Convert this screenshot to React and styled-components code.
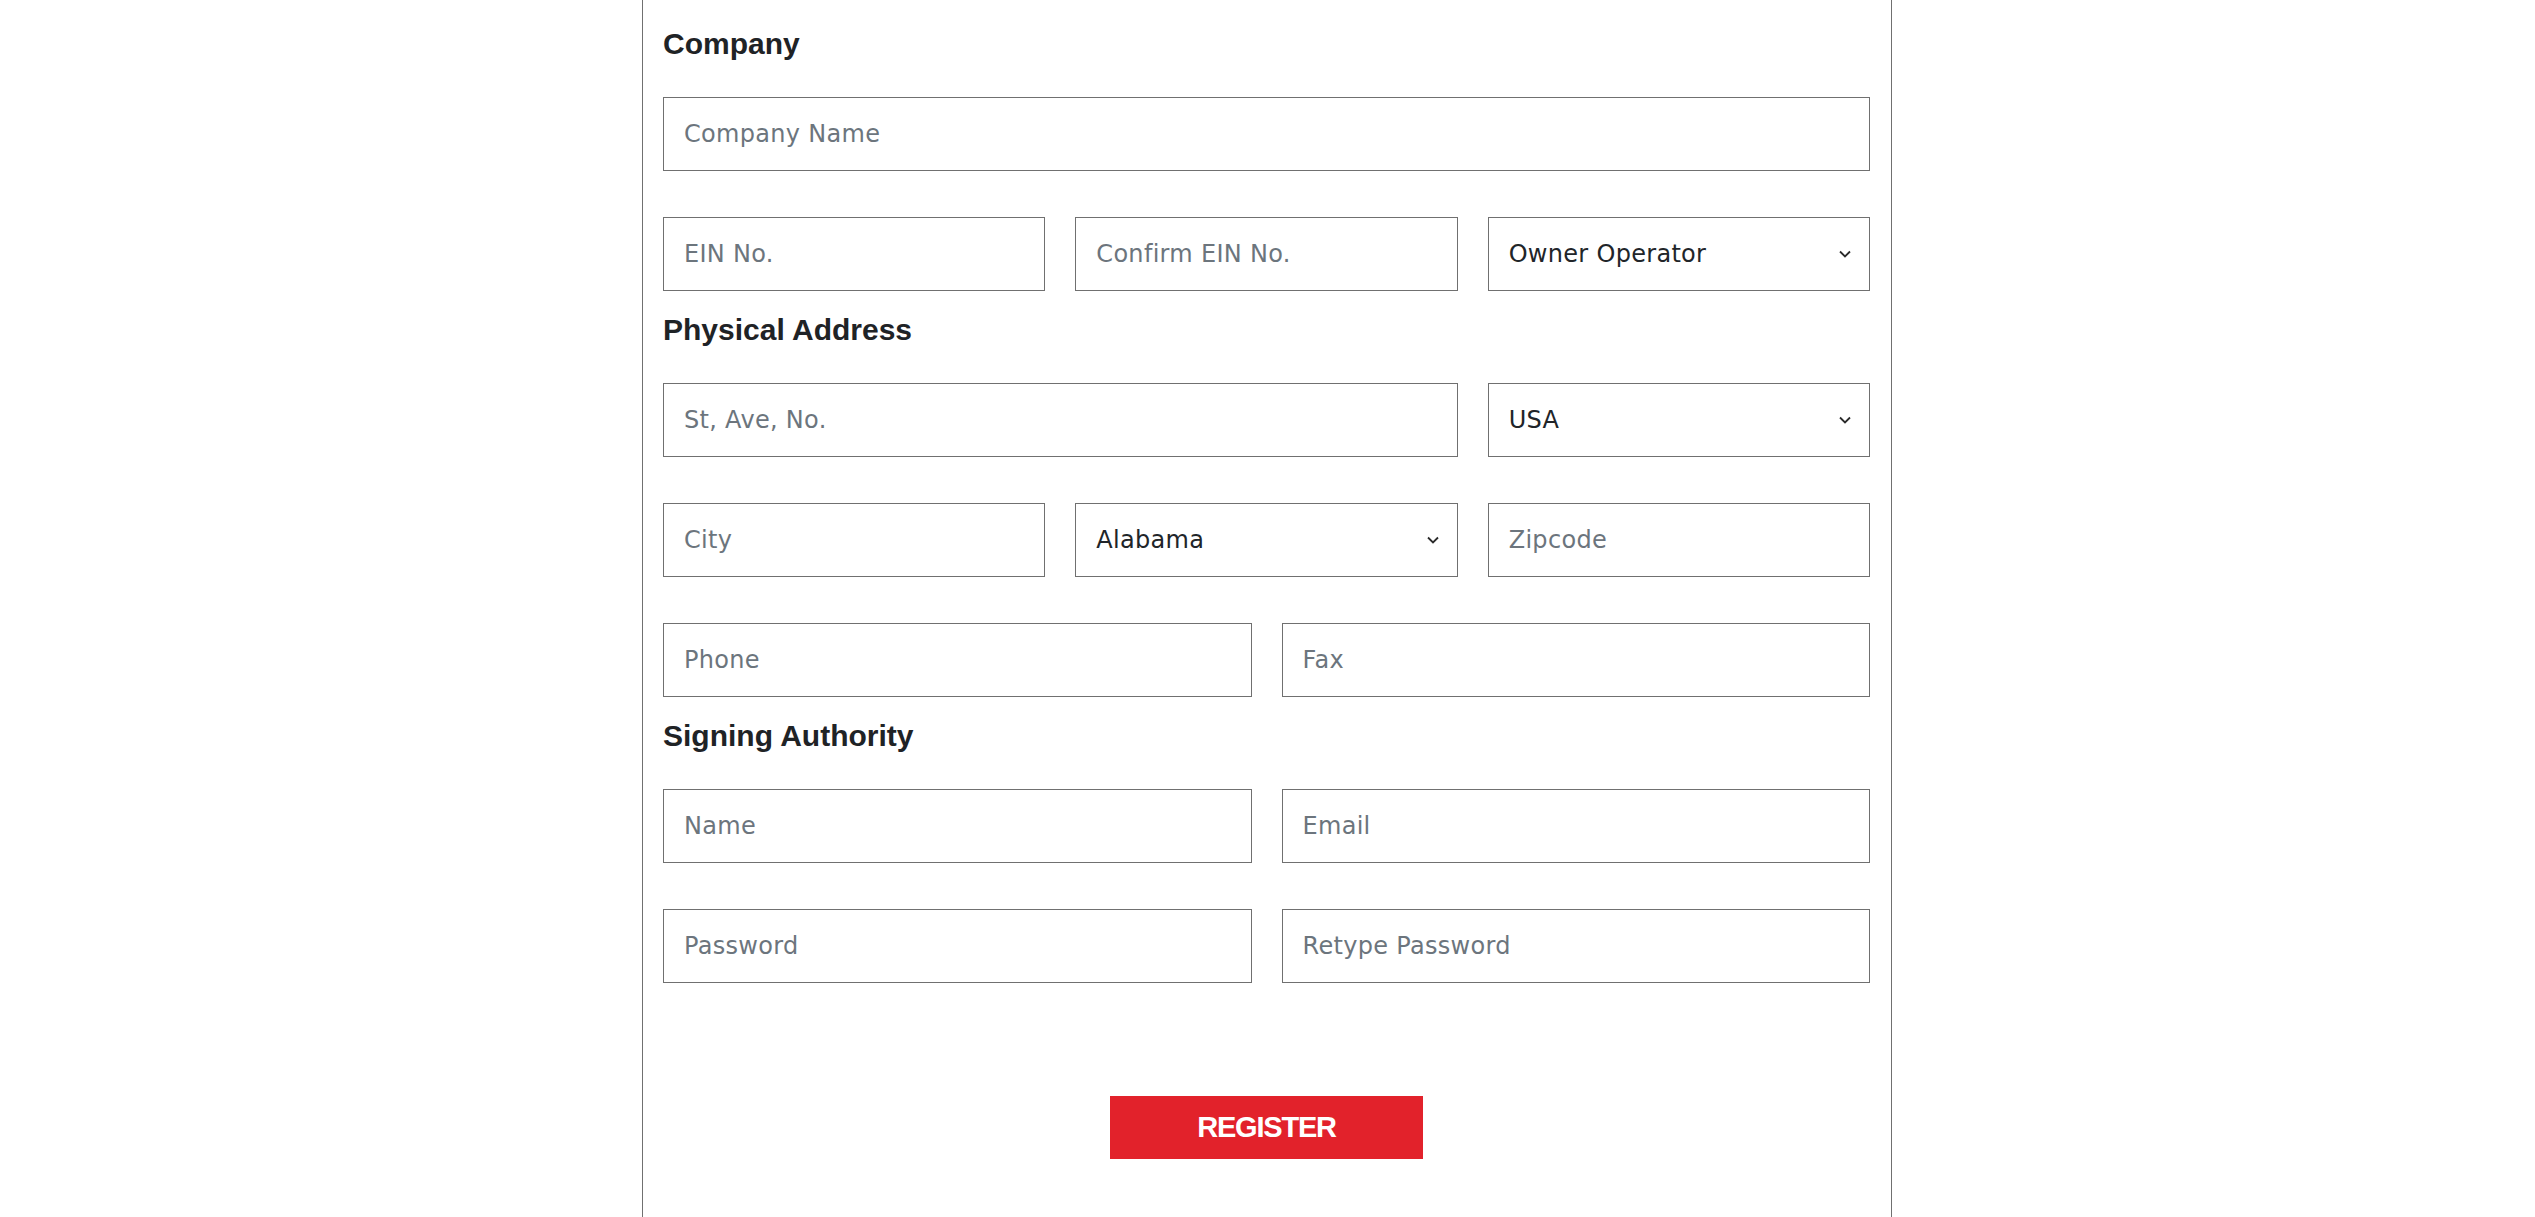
import React from "react";
import styled, { createGlobalStyle } from "styled-components";

const GlobalStyle = createGlobalStyle`
  html, body {
    margin: 0;
    padding: 0;
    background: #ffffff;
  }
  body {
    font-family: "DejaVu Sans", "Liberation Sans", sans-serif;
  }
`;

const sections = [
  {
    title: "Company",
    fields: [
      { name: "company", placeholder: "Company Name", span: 6 },
      { name: "ein", placeholder: "EIN No.", span: 2 },
      { name: "ein2", placeholder: "Confirm EIN No.", span: 2 },
      { name: "type", options: ["Owner Operator", "Carrier", "Broker"], span: 2 },
    ],
  },
  {
    title: "Physical Address",
    fields: [
      { name: "street", placeholder: "St, Ave, No.", span: 4 },
      { name: "country", options: ["USA", "Canada", "Mexico"], span: 2 },
      { name: "city", placeholder: "City", span: 2 },
      { name: "state", options: ["Alabama", "Alaska", "Arizona"], span: 2 },
      { name: "zip", placeholder: "Zipcode", span: 2 },
      { name: "phone", placeholder: "Phone", span: 3 },
      { name: "fax", placeholder: "Fax", span: 3 },
    ],
  },
  {
    title: "Signing Authority",
    fields: [
      { name: "name", placeholder: "Name", span: 3 },
      { name: "email", placeholder: "Email", span: 3 },
      { name: "password", placeholder: "Password", span: 3, type: "password" },
      { name: "password2", placeholder: "Retype Password", span: 3, type: "password" },
    ],
  },
];

const Chevron = () => (
  <ChevronIcon width="12" height="8" viewBox="0 0 12 8">
    <path d="M1 1.5l5 5 5-5" fill="none" stroke="#2a2a2a" strokeWidth="1.8" />
  </ChevronIcon>
);

const App = () => {
  return (
    <Page>
      <GlobalStyle />
      <Card>
        {sections.map((section) => (
          <Section key={section.title}>
            <Heading>{section.title}</Heading>
            <Grid>
              {section.fields.map((f) => (
                <Field key={f.name} $span={f.span}>
                  {f.options ? (
                    <>
                      <Select defaultValue={f.options[0]}>
                        {f.options.map((o) => (
                          <option key={o}>{o}</option>
                        ))}
                      </Select>
                      <Chevron />
                    </>
                  ) : (
                    <Input type={f.type || "text"} placeholder={f.placeholder} />
                  )}
                </Field>
              ))}
            </Grid>
          </Section>
        ))}
        <Button type="button">Register</Button>
      </Card>
    </Page>
  );
};

const Page = styled.div`
  padding-right: 1px;
`;

const Card = styled.div`
  box-sizing: border-box;
  width: 1250px;
  min-height: 100vh;
  margin: 0 auto;
  padding: 26px 21px 58px 20px;
  border-left: 1px solid #707070;
  border-right: 1px solid #707070;
  background: #ffffff;
`;

const Section = styled.div`
  display: flex;
  flex-direction: column;

  & + & {
    margin-top: 21px;
  }
`;

const Heading = styled.h3`
  margin: 0 0 35px;
  font-family: "Liberation Sans", Arial, sans-serif;
  font-size: 30px;
  line-height: 36px;
  font-weight: 700;
  color: #1f2326;
`;

const Grid = styled.div`
  display: grid;
  grid-template-columns: repeat(6, 1fr);
  column-gap: 30px;
  row-gap: 46px;
`;

const Field = styled.div`
  position: relative;
  grid-column: span ${(p) => p.$span};
`;

const controlBase = `
  box-sizing: border-box;
  display: block;
  width: 100%;
  height: 74px;
  margin: 0;
  padding: 0 20px;
  border: 1px solid #707070;
  border-radius: 0;
  background: #ffffff;
  font-family: "DejaVu Sans", "Liberation Sans", sans-serif;
  font-size: 24px;
  letter-spacing: 0.3px;
  color: #212529;
  outline: none;
`;

const Input = styled.input`
  ${controlBase}

  &::placeholder {
    color: #6c757d;
    opacity: 1;
  }
`;

const Select = styled.select`
  ${controlBase}
  appearance: none;
  -webkit-appearance: none;
  padding-right: 48px;
  cursor: pointer;
`;

const ChevronIcon = styled.svg`
  position: absolute;
  right: 19px;
  top: 50%;
  transform: translateY(-50%);
  pointer-events: none;
`;

const Button = styled.button`
  display: block;
  width: 313px;
  height: 63px;
  margin: 113px auto 0;
  border: 0;
  border-radius: 0;
  background: #e2222b;
  color: #ffffff;
  font-family: "Liberation Sans", Arial, sans-serif;
  font-size: 29px;
  font-weight: 700;
  letter-spacing: -1.2px;
  text-transform: uppercase;
  cursor: pointer;
`;

export default App;
